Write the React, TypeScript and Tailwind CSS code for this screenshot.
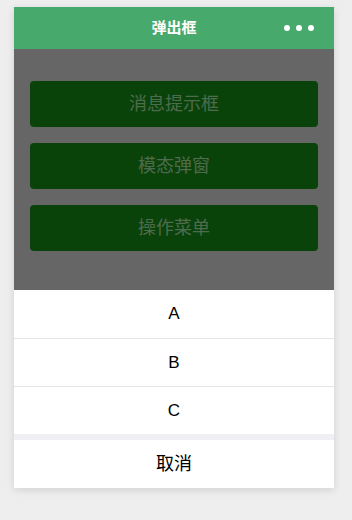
export default function App() {
  const font = { fontFamily: '"Liberation Sans", "Noto Sans CJK SC", sans-serif' };
  return (
    <div className="w-[352px] h-[520px] bg-[#eeeeee] pt-[7px]" style={font}>
      <div className="mx-[14px] w-[320px] bg-white shadow-[0_2px_8px_rgba(0,0,0,0.12)]">
        <div className="relative h-[42px] bg-[#48a96d] flex items-center justify-center">
          <span className="text-white text-[15px] font-bold">弹出框</span>
          <div className="absolute right-[20px] top-[18px] flex gap-[6px]">
            <span className="w-[6px] h-[6px] rounded-full bg-white" />
            <span className="w-[6px] h-[6px] rounded-full bg-white" />
            <span className="w-[6px] h-[6px] rounded-full bg-white" />
          </div>
        </div>
        <div className="h-[241px] bg-[#666666] pt-[32px] px-[16px] flex flex-col gap-[16px]">
          {["消息提示框", "模态弹窗", "操作菜单"].map((t) => (
            <div
              key={t}
              className="h-[46px] rounded-[4px] bg-[#0a430a] flex items-center justify-center text-[18px] text-[#4e6b4e]"
            >
              {t}
            </div>
          ))}
        </div>
        <div className="bg-white">
          <div className="h-[48px] flex items-center justify-center text-[17px] text-black">A</div>
          <div className="h-[48px] border-t border-[#e5e5e5] flex items-center justify-center text-[17px] text-black">B</div>
          <div className="h-[48px] border-t border-[#e5e5e5] flex items-center justify-center text-[17px] text-black">C</div>
          <div className="h-[6px] bg-[#efeff4]" />
          <div className="h-[48px] flex items-center justify-center text-[18px] text-black">取消</div>
        </div>
      </div>
    </div>
  );
}
